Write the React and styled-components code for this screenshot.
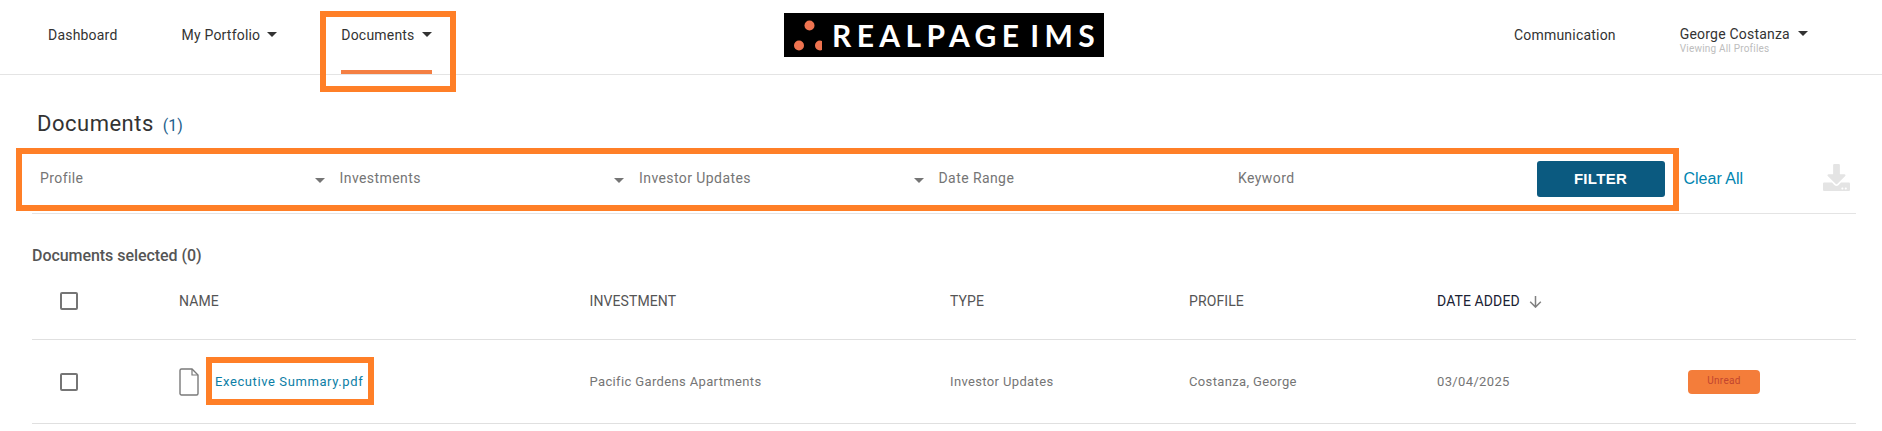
import React from "react";
import styled, { createGlobalStyle } from "styled-components";
import { FaDownload } from "react-icons/fa";

const Global = createGlobalStyle`
  html, body { margin: 0; padding: 0; background: #fff; }
  body { font-family: Roboto, "Liberation Sans", sans-serif; color: #333; overflow: hidden; }
  * { box-sizing: border-box; }
`;

const Page = styled.div`width: 1882px; height: 431px; overflow: hidden;`;

const Highlight = styled.span`
  position: absolute;
  inset: ${(p) => p.$inset};
  border: 6px solid #ff7f27;
  pointer-events: none;
`;

const Nav = styled.header`
  display: grid;
  grid-template-columns: 784px 320px 1fr;
  height: 75px;
  border-bottom: 1px solid #e4e4e4;
`;
const NavLeft = styled.nav`
  display: flex;
  gap: 64px;
  padding-left: 48px;
`;
const NavRight = styled.nav`
  display: flex;
  gap: 64px;
  padding-left: 410px;
`;
const NavItem = styled.a`
  position: relative;
  display: flex;
  align-items: flex-start;
  gap: 7px;
  height: 74px;
  padding-top: 26px;
  font-size: 14px;
  line-height: 18px;
  letter-spacing: 0.2px;
  color: #333;
  white-space: nowrap;
`;
const ActiveBar = styled.span`
  position: absolute;
  left: 0;
  right: 0;
  bottom: 0;
  height: 4px;
  background: #f47f43;
`;
const Caret = styled.span`
  flex: none;
  width: 0;
  height: 0;
  margin-top: ${(p) => p.$top || 6}px;
  border-left: 5px solid transparent;
  border-right: 5px solid transparent;
  border-top: 5px solid ${(p) => p.$color || "#333"};
`;
const Logo = styled.div`
  display: flex;
  align-items: center;
  align-self: start;
  margin-top: 13px;
  height: 44px;
  padding-left: 10px;
  gap: 10px;
  background: #000;
  overflow: hidden;
`;
const LogoMark = styled.svg`
  flex: none;
  margin-top: 1px;
`;
const LogoText = styled.span`
  font-family: Lato, sans-serif;
  font-weight: 700;
  font-size: 30px;
  line-height: 44px;
  letter-spacing: 5.4px;
  word-spacing: -7px;
  color: #fff;
  white-space: nowrap;
`;
const UserBlock = styled.div`
  display: flex;
  flex-direction: column;
  padding-top: 25px;
`;
const UserName = styled.div`
  display: flex;
  gap: 8px;
  font-size: 14px;
  line-height: 18px;
  letter-spacing: 0.2px;
  color: #333;
`;
const UserSub = styled.div`
  font-size: 10px;
  line-height: 12px;
  letter-spacing: 0.2px;
  color: #bdbdbd;
`;

const Main = styled.main`
  padding: 0 26px 0 32px;
`;
const TitleRow = styled.div`
  display: flex;
  align-items: baseline;
  gap: 9px;
  height: 73px;
  padding: 35px 0 10px 5px;
`;
const Title = styled.h1`
  margin: 0;
  font-size: 22px;
  font-weight: 400;
  line-height: 28px;
  letter-spacing: 0.5px;
  color: #333;
`;
const Count = styled.span`
  font-size: 16px;
  color: #1f5f8b;
`;

const FilterBar = styled.div`
  position: relative;
  display: flex;
  align-items: center;
  height: 66px;
  padding-left: 8px;
  border-bottom: 1px solid #e4e4e4;
`;
const FilterCell = styled.div`
  flex: 0 0 299.5px;
  display: flex;
  align-items: center;
  justify-content: space-between;
  height: 20px;
  padding-right: 15px;
  margin-bottom: 6px;
  font-size: 14px;
  letter-spacing: 0.42px;
  color: #757575;
`;
const FilterButton = styled.button`
  flex: none;
  width: 128px;
  height: 36px;
  margin-left: -1px;
  margin-bottom: 4px;
  border: 0;
  border-radius: 3px;
  background: #0b5a80;
  color: #fff;
  font-family: "Liberation Sans", Arial, sans-serif;
  font-size: 15px;
  font-weight: 700;
  letter-spacing: 0.3px;
`;
const ClearAll = styled.a`
  margin-left: 19px;
  margin-bottom: 4px;
  font-family: "Liberation Sans", Arial, sans-serif;
  font-size: 16px;
  color: #0085b0;
`;
const DownloadIcon = styled(FaDownload)`
  margin-left: 80px;
  margin-bottom: 7px;
  color: #e4e4e4;
`;

const Selected = styled.div`
  margin-top: 32px;
  font-size: 16px;
  font-weight: 500;
  line-height: 20px;
  letter-spacing: -0.05px;
  color: #555;
`;

const TableRow = styled.div`
  display: grid;
  grid-template-columns: 119px 410.5px 360.5px 239px 248px 251px 1fr;
  align-items: center;
  padding-left: 28px;
  padding-bottom: ${(p) => (p.$head ? 3 : 0)}px;
  height: ${(p) => (p.$head ? 74 : 84)}px;
  border-bottom: 1px solid #e0e0e0;
`;
const HeadCell = styled.div`
  display: flex;
  align-items: center;
  gap: 9px;
  font-size: 14px;
  letter-spacing: 0.1px;
  color: ${(p) => (p.$active ? "#1a2233" : "#555")};
`;
const Cell = styled.div`
  font-size: 13px;
  letter-spacing: 0.36px;
  color: #757575;
`;
const Check = styled.span`
  display: block;
  width: 18px;
  height: 18px;
  border: 2px solid #757575;
  border-radius: 2px;
`;
const NameCell = styled.div`
  display: flex;
  align-items: center;
  gap: 16px;
`;
const FileLink = styled.a`
  position: relative;
  font-size: 13px;
  letter-spacing: 0.6px;
  color: #0c7ea6;
  white-space: nowrap;
`;
const Badge = styled.span`
  display: flex;
  align-items: center;
  justify-content: center;
  width: 72px;
  height: 24px;
  padding-bottom: 2px;
  border-radius: 4px;
  background: #f47d3a;
  color: #c2452f;
  font-size: 10px;
  letter-spacing: 0.3px;
`;

const FileIcon = () => (
  <svg width="20" height="28" viewBox="0 0 20 28" fill="none" stroke="#7a7a7a" strokeWidth="1.4">
    <path d="M2.5 1h10.5l6 6v18.5a1.5 1.5 0 0 1-1.5 1.5h-15A1.5 1.5 0 0 1 1 25.5v-23A1.5 1.5 0 0 1 2.5 1z" />
    <path d="M13 1v6h6" strokeWidth="1.2" />
  </svg>
);
const SortArrow = () => (
  <svg width="13" height="13" viewBox="0 0 13 13" fill="none" stroke="#808080" strokeWidth="1.5">
    <path d="M6.5 1v11M1.2 6.8l5.3 5.3 5.3-5.3" />
  </svg>
);
const LogoDots = () => (
  <LogoMark width="28" height="32" viewBox="0 0 28 32" fill="#ee7350">
    <circle cx="15.5" cy="5.5" r="5" />
    <circle cx="5" cy="25.5" r="5" />
    <circle cx="26" cy="25.5" r="5" />
  </LogoMark>
);

export default function App() {
  return (
    <Page>
      <Global />
      <Nav>
        <NavLeft>
          <NavItem>Dashboard</NavItem>
          <NavItem>My Portfolio <Caret /></NavItem>
          <NavItem>
            Documents <Caret />
            <ActiveBar />
            <Highlight $inset="11px -24px -18px -21px" />
          </NavItem>
        </NavLeft>
        <Logo>
          <LogoDots />
          <LogoText>REALPAGE IMS</LogoText>
        </Logo>
        <NavRight>
          <NavItem>Communication</NavItem>
          <UserBlock>
            <UserName>George Costanza <Caret /></UserName>
            <UserSub>Viewing All Profiles</UserSub>
          </UserBlock>
        </NavRight>
      </Nav>
      <Main>
        <TitleRow>
          <Title>Documents</Title>
          <Count>(1)</Count>
        </TitleRow>
        <FilterBar>
          <Highlight $inset="0 177px 2px -16px" />
          <FilterCell>Profile <Caret $color="#757575" $top={5} /></FilterCell>
          <FilterCell>Investments <Caret $color="#757575" $top={5} /></FilterCell>
          <FilterCell>Investor Updates <Caret $color="#757575" $top={5} /></FilterCell>
          <FilterCell>Date Range</FilterCell>
          <FilterCell>Keyword</FilterCell>
          <FilterButton>FILTER</FilterButton>
          <ClearAll>Clear All</ClearAll>
          <DownloadIcon size={27} />
        </FilterBar>
        <Selected>Documents selected (0)</Selected>
        <TableRow $head>
          <Check />
          <HeadCell>NAME</HeadCell>
          <HeadCell>INVESTMENT</HeadCell>
          <HeadCell>TYPE</HeadCell>
          <HeadCell>PROFILE</HeadCell>
          <HeadCell $active>DATE ADDED <SortArrow /></HeadCell>
          <span />
        </TableRow>
        <TableRow>
          <Check />
          <NameCell>
            <FileIcon />
            <FileLink>
              Executive Summary.pdf
              <Highlight $inset="-17px -11px -16px -9px" />
            </FileLink>
          </NameCell>
          <Cell>Pacific Gardens Apartments</Cell>
          <Cell>Investor Updates</Cell>
          <Cell>Costanza, George</Cell>
          <Cell>03/04/2025</Cell>
          <Badge>Unread</Badge>
        </TableRow>
      </Main>
    </Page>
  );
}
